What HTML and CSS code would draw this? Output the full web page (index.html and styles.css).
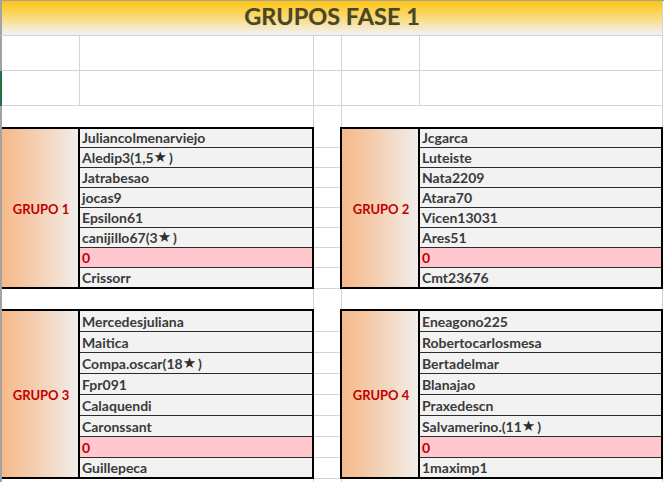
FILE: index.html
```html
<!DOCTYPE html>
<html lang="es">
<head>
<meta charset="utf-8">
<title>Grupos Fase 1</title>
<link rel="stylesheet" href="styles.css">
</head>
<body>
<div class="sheet">
  <div class="title-row"><h1 class="title">GRUPOS FASE 1</h1></div>

  <div class="row blank">
    <div class="cell c-a"></div><div class="cell c-b"></div><div class="cell c-c"></div><div class="cell c-d"></div><div class="cell c-e"></div>
  </div>
  <div class="row blank active">
    <div class="cell c-a"></div><div class="cell c-b"></div><div class="cell c-c"></div><div class="cell c-d"></div><div class="cell c-e"></div>
  </div>

  <div class="row spacer">
    <div class="fill fill-left"></div><div class="cell c-c"></div><div class="fill fill-right"></div>
  </div>

  <div class="group-row">
    <div class="group group-left">
      <div class="label">GRUPO 1</div>
      <ul class="names">
        <li class="name">Juliancolmenarviejo</li>
        <li class="name">Aledip3(1,5<span class="star">★</span>)</li>
        <li class="name">Jatrabesao</li>
        <li class="name">jocas9</li>
        <li class="name">Epsilon61</li>
        <li class="name">canijillo67(3<span class="star">★</span>)</li>
        <li class="name zero">0</li>
        <li class="name">Crissorr</li>
      </ul>
    </div>
    <div class="gutter">
      <div class="gcell"></div><div class="gcell"></div><div class="gcell"></div><div class="gcell"></div>
      <div class="gcell"></div><div class="gcell"></div><div class="gcell"></div><div class="gcell"></div>
    </div>
    <div class="group group-right">
      <div class="label">GRUPO 2</div>
      <ul class="names">
        <li class="name">Jcgarca</li>
        <li class="name">Luteiste</li>
        <li class="name">Nata2209</li>
        <li class="name">Atara70</li>
        <li class="name">Vicen13031</li>
        <li class="name">Ares51</li>
        <li class="name zero">0</li>
        <li class="name">Cmt23676</li>
      </ul>
    </div>
  </div>

  <div class="row gap">
    <div class="fill fill-left"></div><div class="cell c-c"></div><div class="fill fill-right"></div>
  </div>

  <div class="group-row tall">
    <div class="group group-left">
      <div class="label">GRUPO 3</div>
      <ul class="names">
        <li class="name">Mercedesjuliana</li>
        <li class="name">Maitica</li>
        <li class="name">Compa.oscar(18<span class="star">★</span>)</li>
        <li class="name">Fpr091</li>
        <li class="name">Calaquendi</li>
        <li class="name">Caronssant</li>
        <li class="name zero">0</li>
        <li class="name">Guillepeca</li>
      </ul>
    </div>
    <div class="gutter">
      <div class="gcell"></div><div class="gcell"></div><div class="gcell"></div><div class="gcell"></div>
      <div class="gcell"></div><div class="gcell"></div><div class="gcell"></div><div class="gcell"></div>
    </div>
    <div class="group group-right">
      <div class="label">GRUPO 4</div>
      <ul class="names">
        <li class="name">Eneagono225</li>
        <li class="name">Robertocarlosmesa</li>
        <li class="name">Bertadelmar</li>
        <li class="name">Blanajao</li>
        <li class="name">Praxedescn</li>
        <li class="name">Salvamerino.(11<span class="star">★</span>)</li>
        <li class="name zero">0</li>
        <li class="name">1maximp1</li>
      </ul>
    </div>
  </div>

  <div class="row tail">
    <div class="fill fill-left"></div><div class="cell c-c"></div><div class="fill fill-right"></div>
  </div>
</div>
</body>
</html>
```

FILE: styles.css
```css
* {
  box-sizing: border-box;
  margin: 0;
  padding: 0;
}

body {
  margin: 0;
  background: #ffffff;
  font-family: Lato, "Liberation Sans", sans-serif;
}

.sheet {
  width: 664px;
  height: 482px;
  border-top: 1px solid #a3a3a3;
  overflow: hidden;
}

.title-row,
.row,
.group-row {
  display: flex;
  width: 663px;
  border-left: 2px solid #a3a3a3;
}

/* title */
.title-row {
  height: 35px;
  border-right: 1px solid #d4d4d4;
  border-bottom: 1px solid #d4d4d4;
}

.title {
  flex: 1;
  display: flex;
  justify-content: center;
  align-items: flex-start;
  padding-top: 3px;
  font-size: 23.5px;
  line-height: 24px;
  font-weight: 700;
  color: #4a4626;
  background: linear-gradient(#ffc414 0%, #fbd766 40%, #f2f0ec 95%);
  text-shadow: 0 0 1px rgba(90, 80, 40, 0.35);
}

/* blank spreadsheet rows */
.row.blank {
  height: 35px;
}

.row.active {
  border-left-color: #217346;
}

.cell {
  border-right: 1px solid #d4d4d4;
}

.row.blank .cell {
  border-bottom: 1px solid #d4d4d4;
}

.c-a { width: 78px; }
.c-b { width: 234px; }
.c-c { width: 28px; }
.c-d { width: 78px; }
.c-e { width: 243px; }

.row.spacer { height: 21px; }
.row.gap { height: 20px; }
.row.tail { height: 3px; }

.fill { border-right: 1px solid #d4d4d4; }
.fill-left { width: 312px; }
.fill-right { width: 321px; }

/* group rows */
.group-row { height: 162px; }
.group-row.tall { height: 170px; }

.group {
  display: flex;
  border: 2px solid #000000;
}

.group-left {
  width: 312px;
  border-left: none;
}

.group-right {
  width: 323px;
}

.label {
  width: 78px;
  flex: none;
  display: flex;
  align-items: center;
  justify-content: center;
  padding-top: 2px;
  padding-left: 2px;
  border-right: 2px solid #000000;
  background: linear-gradient(to right, #f6b98a 0%, #f4cfb2 45%, #f1eeeb 100%);
  color: #c00000;
  font-size: 13px;
  font-weight: 700;
  white-space: nowrap;
}

.names {
  flex: 1;
  list-style: none;
  display: flex;
  flex-direction: column;
}

.name {
  height: 20px;
  flex: none;
  display: flex;
  align-items: flex-end;
  padding-left: 2px;
  padding-bottom: 2px;
  border-top: 1px solid #2b2b2b;
  background: #f2f2f2;
  color: #3a3a3a;
  font-size: 14px;
  line-height: 15px;
  font-weight: 700;
  white-space: nowrap;
}

.name:first-child {
  height: 18px;
  border-top: none;
}

.tall .name { height: 21px; }
.tall .name:first-child { height: 20px; }
.tall .name:last-child { height: 20px; }

.name.zero {
  background: #ffc7ce;
  color: #c00000;
}

.star {
  font-family: "DejaVu Sans", sans-serif;
  font-size: 15px;
  color: #2e2e2e;
  padding-right: 2px;
}

/* column between the two groups */
.gutter {
  width: 26px;
  flex: none;
}

.gcell {
  height: 20px;
  border-bottom: 1px solid #d4d4d4;
}

.gcell:first-child,
.gcell:last-child {
  height: 21px;
}

.tall .gcell { height: 21px; }
.tall .gcell:first-child { height: 23px; }
```
